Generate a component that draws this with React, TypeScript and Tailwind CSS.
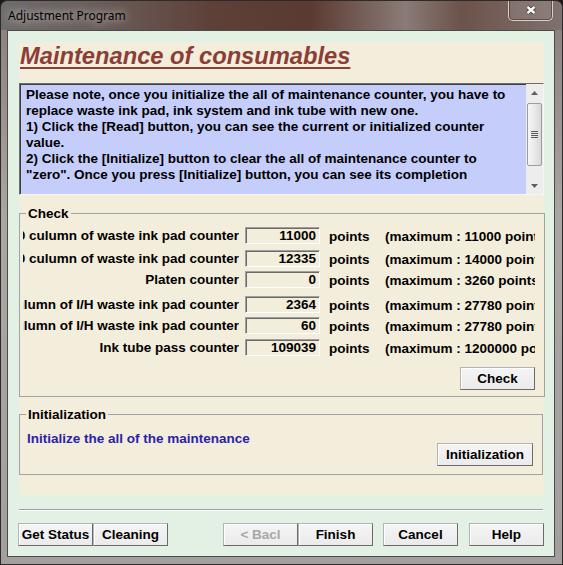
import React from "react";

type Row = { label: string; value: string; max: string; gap: string };

const rows: Row[] = [
  { label: "No.0 culumn of waste ink pad counter", value: "11000", max: "(maximum : 11000 points)", gap: "mt-[6px]" },
  { label: "No.0 culumn of waste ink pad counter", value: "12335", max: "(maximum : 14000 points)", gap: "mt-[6px]" },
  { label: "Platen counter", value: "0", max: "(maximum : 3260 points)", gap: "mt-[4px]" },
  { label: "Left culumn of I/H waste ink pad counter", value: "2364", max: "(maximum : 27780 points)", gap: "mt-[8px]" },
  { label: "Right culumn of I/H waste ink pad counter", value: "60", max: "(maximum : 27780 points)", gap: "mt-[4px]" },
  { label: "Ink tube pass counter", value: "109039", max: "(maximum : 1200000 points)", gap: "mt-[5px]" },
];

const noteLines = [
  "Please note, once you initialize the all of maintenance counter, you have to",
  "replace waste ink pad, ink system and ink tube with new one.",
  "1) Click the [Read] button, you can see the current or initialized counter",
  "value.",
  "2) Click the [Initialize] button to clear the all of maintenance counter to",
  "\"zero\". Once you press [Initialize] button, you can see its completion",
];

const WinButton: React.FC<{ children: React.ReactNode; className?: string; disabled?: boolean }> = ({
  children,
  className = "",
  disabled = false,
}) => (
  <button
    className={`flex h-[23px] items-center justify-center border border-t-[#b4b4b4] border-l-[#b4b4b4] border-r-[#6a6a6a] border-b-[#6a6a6a] bg-[linear-gradient(180deg,#f4f4f4_0%,#ebebeb_100%)] shadow-[inset_1px_1px_0_#ffffff] text-[13.5px] font-bold leading-none ${
      disabled ? "text-[#a8a8a8]" : "text-black"
    } ${className}`}
  >
    {children}
  </button>
);

const Scrollbar: React.FC = () => (
  <div className="flex w-[17px] flex-col bg-[#ededed]">
    <div className="flex h-[17px] items-center justify-center">
      <svg width="7" height="4" viewBox="0 0 7 4">
        <path d="M0 4 L3.5 0 L7 4 Z" fill="#606060" />
      </svg>
    </div>
    <div className="mx-[1px] mt-[2px] flex h-[63px] items-center justify-center rounded-[2px] border border-[#9c9c9c] bg-[linear-gradient(90deg,#f6f6f6_0%,#e9e9e9_50%,#d9d9d9_100%)]">
      <div className="flex flex-col gap-[1px]">
        <div className="h-px w-[7px] bg-[#5c5c5c]" />
        <div className="h-px w-[7px] bg-[#5c5c5c]" />
        <div className="h-px w-[7px] bg-[#5c5c5c]" />
        <div className="h-px w-[7px] bg-[#5c5c5c]" />
      </div>
    </div>
    <div className="flex-1" />
    <div className="flex h-[17px] items-center justify-center">
      <svg width="7" height="4" viewBox="0 0 7 4">
        <path d="M0 0 L3.5 4 L7 0 Z" fill="#606060" />
      </svg>
    </div>
  </div>
);

export default function App() {
  return (
    <div className="h-[565px] w-[563px] bg-[#1b1817] font-['Liberation_Sans',Arial,sans-serif] text-[13.5px] font-bold text-black">
      <div className="flex h-full w-full flex-col overflow-hidden rounded-t-[7px] border border-[#2e2a29]">
        {/* title bar */}
        <div className="flex h-[29px] items-start bg-[linear-gradient(90deg,#6f6c6c_0%,#6a5d59_18%,#5d4037_38%,#5a3a31_55%,#8a7b77_72%,#6c534b_82%,#7f716d_100%)] pl-[7px] pr-[9px]">
          <span className="mt-[7px] font-['Noto_Sans',sans-serif] text-[12px] font-normal leading-[16px] text-black [text-shadow:0_0_8px_rgba(255,255,255,0.9)]">
            Adjustment Program
          </span>
          <div className="-mt-px ml-auto flex h-[21px] w-[45px] items-center justify-center rounded-b-[5px] border border-t-0 border-[#d9cfcb] bg-white/10 shadow-[inset_0_0_0_1px_rgba(60,40,35,0.55)]">
            <svg width="12" height="10" viewBox="0 0 12 10">
              <path d="M2.5 2 L9.5 8 M9.5 2 L2.5 8" stroke="#3a3433" strokeWidth="4" />
              <path d="M2.5 2 L9.5 8 M9.5 2 L2.5 8" stroke="#ffffff" strokeWidth="2.4" />
            </svg>
          </div>
        </div>

        {/* frame + client */}
        <div className="flex flex-1 flex-col bg-[linear-gradient(180deg,#8e827d_0%,#aaa6a4_35%,#a2a09f_100%)] pl-[6px] pr-[7px] pb-[7px]">
          <div className="flex flex-1 flex-col border border-[#4b4b4b] bg-[#e2f1e3]">
            {/* beige panel */}
            <div className="ml-[11px] mr-[10px] mt-[11px] flex h-[453px] flex-col bg-[#f3eddb]">
              <div className="h-[41px] pl-[1px]">
                <span className="text-[23.7px] italic leading-[28px] text-[#8b3d36] underline decoration-2 underline-offset-[3px]">
                  Maintenance of consumables
                </span>
              </div>

              <div className="flex h-[112px] border border-t-[#6d6d6d] border-l-[#6d6d6d] border-r-[#f6f6f6] border-b-[#f6f6f6] bg-[#c5cdfa] shadow-[inset_1px_1px_0_#3e3e3e]">
                <div className="flex-1 overflow-hidden whitespace-nowrap pl-[6px] pt-[3px] leading-[16px]">
                  {noteLines.map((l, i) => (
                    <div key={i}>{l}</div>
                  ))}
                </div>
                <Scrollbar />
              </div>

              <fieldset className="mr-[1px] mt-[11px] border border-[#a3a3a3] pb-[6px]">
                <legend className="ml-[6px] px-[2px] leading-[15px]">Check</legend>
                <div className="pl-[3px] pr-[9px]">
                  {rows.map((r, i) => (
                    <div key={i} className={`flex h-[17px] items-center ${r.gap}`}>
                      <div className="w-[216px] overflow-hidden whitespace-nowrap pt-[2px]">
                        <div className="float-right">{r.label}</div>
                      </div>
                      <div className="ml-[6px] flex h-[17px] w-[75px] items-center justify-end border border-t-[#a0a0a0] border-l-[#a0a0a0] border-r-[#ffffff] border-b-[#ffffff] pr-[3px] pt-px shadow-[inset_1px_1px_0_#6a6a6a]">
                        {r.value}
                      </div>
                      <div className="ml-[9px] w-[56px] pt-[3px]">points</div>
                      <div className="w-[150px] overflow-hidden whitespace-nowrap pt-[3px]">{r.max}</div>
                    </div>
                  ))}
                  <div className="mt-[11px] flex justify-end">
                    <WinButton className="w-[75px]">Check</WinButton>
                  </div>
                </div>
              </fieldset>

              <fieldset className="mr-[1px] mt-[10px] border border-[#a3a3a3] pb-[8px]">
                <legend className="ml-[6px] px-[2px] leading-[15px]">Initialization</legend>
                <div className="flex items-start justify-between pl-[7px] pr-[9px]">
                  <div className="mt-[9px] leading-[15px] text-[#2a22ad]">Initialize the all of the maintenance</div>
                  <WinButton className="mt-[21px] w-[96px]">Initialization</WinButton>
                </div>
              </fieldset>
            </div>

            {/* separator */}
            <div className="ml-[11px] mr-[11px] mt-[14px] h-[2px] border-t border-b border-t-[#a0a0a0] border-b-[#ffffff]" />

            {/* bottom buttons */}
            <div className="ml-[10px] mt-[12px] flex">
              <WinButton className="w-[75px]">Get Status</WinButton>
              <WinButton className="w-[75px]">Cleaning</WinButton>
              <WinButton className="ml-[55px] w-[75px]" disabled>
                &lt; Bacl
              </WinButton>
              <WinButton className="w-[75px]">Finish</WinButton>
              <WinButton className="ml-[10px] w-[75px]">Cancel</WinButton>
              <WinButton className="ml-[11px] w-[75px]">Help</WinButton>
            </div>
          </div>
        </div>
      </div>
    </div>
  );
}
